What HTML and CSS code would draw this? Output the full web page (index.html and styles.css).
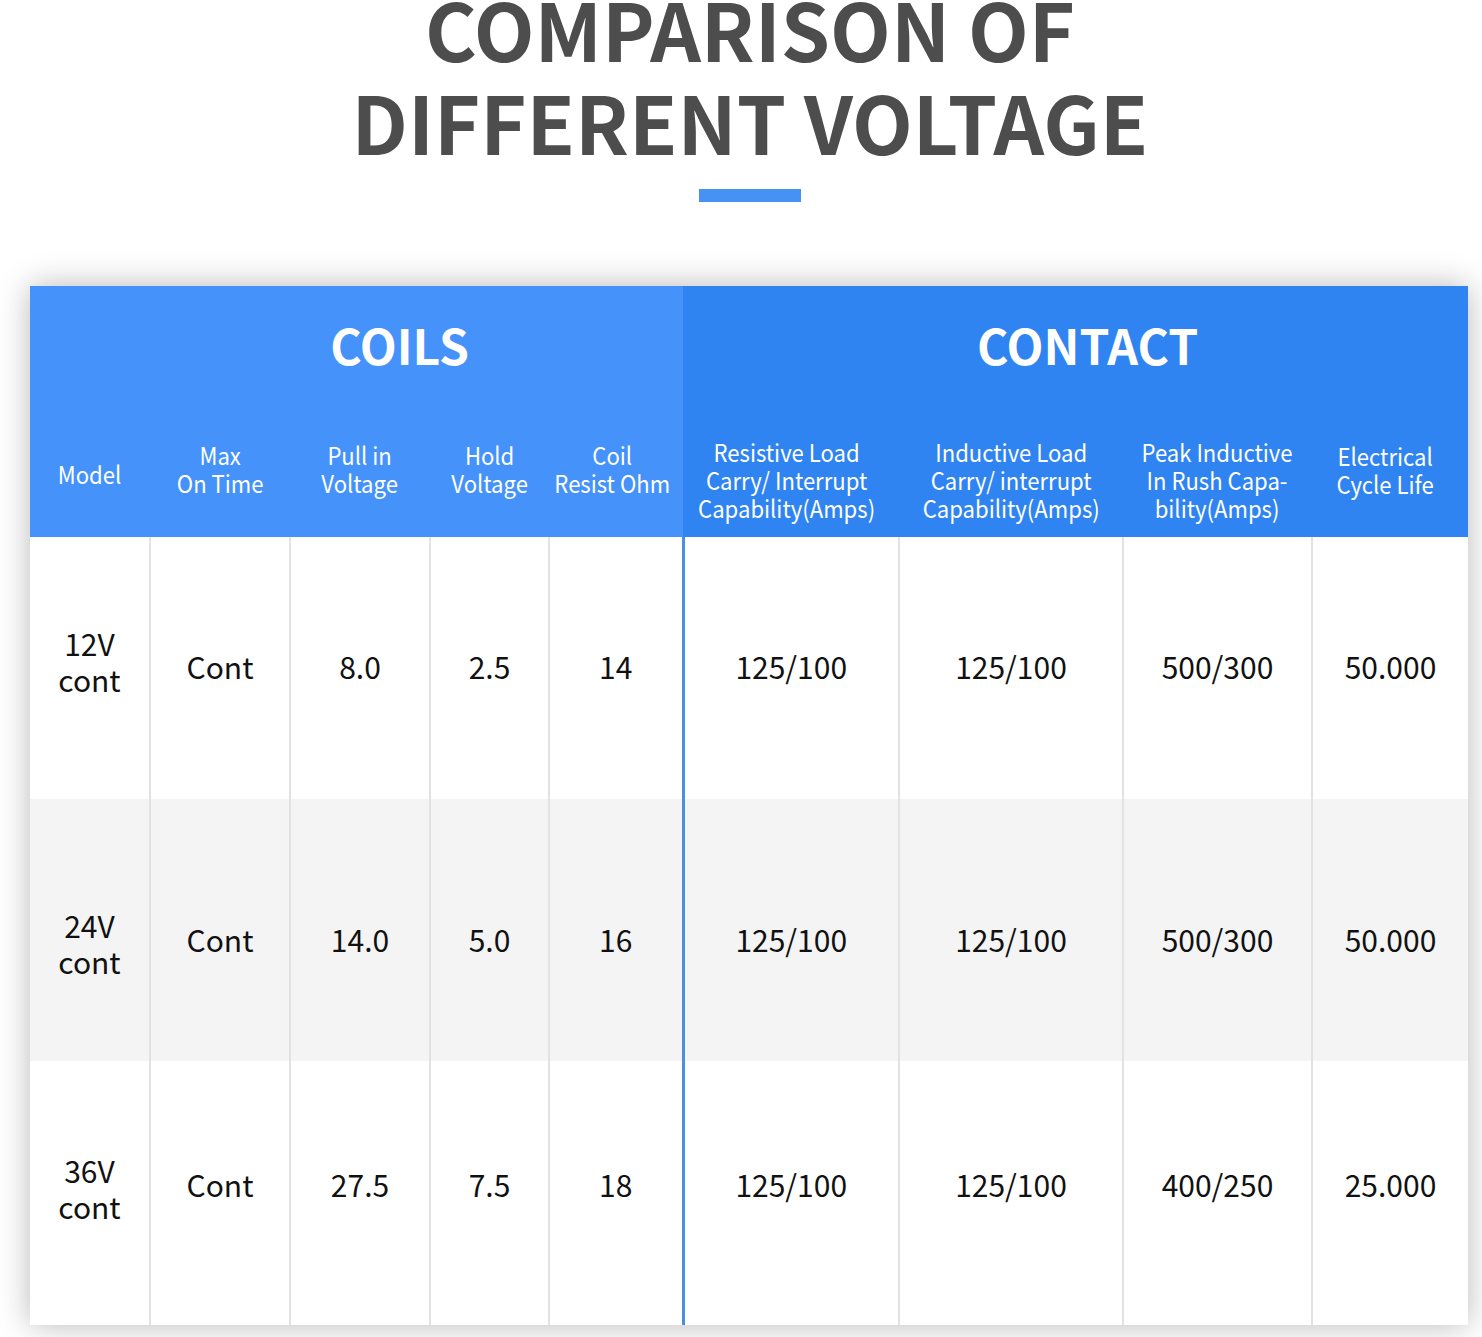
FILE: index.html
```html
<!DOCTYPE html>
<html lang="en">
<head>
<meta charset="utf-8">
<title>Comparison of Different Voltage</title>
<link rel="stylesheet" href="styles.css">
</head>
<body>
<div class="page">
  <div class="heading">
    <h1 class="title">COMPARISON OF<br>DIFFERENT VOLTAGE</h1>
    <div class="title-bar"></div>
  </div>
  <table class="spec">
    <colgroup>
      <col class="c1"><col class="c2"><col class="c3"><col class="c4"><col class="c5">
      <col class="c6"><col class="c7"><col class="c8"><col class="c9">
    </colgroup>
    <thead>
      <tr class="group-row">
        <th colspan="5" class="coils"><span class="group group-coils">COILS</span></th>
        <th colspan="4" class="contact"><span class="group group-contact">CONTACT</span></th>
      </tr>
      <tr class="sub-row">
        <th class="coils"><span class="sub">Model</span></th>
        <th class="coils"><span class="sub two">Max<br>On Time</span></th>
        <th class="coils"><span class="sub two">Pull in<br>Voltage</span></th>
        <th class="coils"><span class="sub two">Hold<br>Voltage</span></th>
        <th class="coils"><span class="sub two left4">Coil<br>Resist Ohm</span></th>
        <th class="contact"><span class="sub three left5">Resistive Load<br>Carry/ Interrupt<br>Capability(Amps)</span></th>
        <th class="contact"><span class="sub three">Inductive Load<br>Carry/ interrupt<br>Capability(Amps)</span></th>
        <th class="contact"><span class="sub three">Peak Inductive<br>In Rush Capa-<br>bility(Amps)</span></th>
        <th class="contact"><span class="sub life left5">Electrical<br>Cycle Life</span></th>
      </tr>
    </thead>
    <tbody>
      <tr class="row r1">
        <td class="model">12V<br>cont</td><td>Cont</td><td>8.0</td><td>2.5</td><td>14</td>
        <td class="split">125/100</td><td>125/100</td><td>500/300</td><td>50.000</td>
      </tr>
      <tr class="row r2">
        <td class="model">24V<br>cont</td><td>Cont</td><td>14.0</td><td>5.0</td><td>16</td>
        <td class="split">125/100</td><td>125/100</td><td>500/300</td><td>50.000</td>
      </tr>
      <tr class="row r3">
        <td class="model">36V<br>cont</td><td>Cont</td><td>27.5</td><td>7.5</td><td>18</td>
        <td class="split">125/100</td><td>125/100</td><td>400/250</td><td>25.000</td>
      </tr>
    </tbody>
  </table>
</div>
</body>
</html>
```
FILE: styles.css
```css
html, body {
  margin: 0;
  padding: 0;
  background: #ffffff;
}
body {
  font-family: "Noto Sans CJK SC", "Noto Sans", sans-serif;
  color: #111111;
}
.page {
  width: 1482px;
  height: 1337px;
  overflow: hidden;
  display: flex;
  flex-direction: column;
}
.heading {
  display: flex;
  flex-direction: column;
  align-items: center;
  padding-left: 18px;
}
.title {
  margin: -19px 0 0 0;
  font-size: 79px;
  line-height: 93px;
  font-weight: 700;
  color: #4d4d4d;
  text-align: center;
}
.title-bar {
  width: 102px;
  height: 13px;
  background: #4691f4;
  margin-top: 22px;
}
.spec {
  margin-top: 84px;
  margin-left: 30px;
  width: 1438px;
  table-layout: fixed;
  border-collapse: collapse;
  background: #ffffff;
  box-shadow: 0 0 30px rgba(0, 0, 0, 0.28);
}
.c1 { width: 120px; }
.c2 { width: 140px; }
.c3 { width: 140px; }
.c4 { width: 119px; }
.c5 { width: 134px; }
.c6 { width: 216px; }
.c7 { width: 224px; }
.c8 { width: 189px; }
.c9 { width: 156px; }

th {
  padding: 0;
  color: #ffffff;
  font-weight: 400;
  text-align: center;
  vertical-align: middle;
}
th.coils { background: #4592fb; }
th.contact { background: #2f84f1; }
.group-row { height: 125px; }
.sub-row { height: 126px; }
.group {
  display: inline-block;
  font-size: 48px;
  font-weight: 700;
  line-height: 58px;
  padding-bottom: 10px;
}
.group-coils { padding-left: 86px; }
.group-contact { padding-left: 24px; }
.sub {
  display: inline-block;
  font-size: 24px;
  line-height: 28px;
  white-space: nowrap;
  transform: scaleX(0.92);
}
.sub.two { padding-bottom: 10px; }
.sub.three { padding-top: 12px; }
.sub.life { padding-bottom: 8px; }
.sub.left4 { padding-right: 8px; }
.sub.left5 { padding-right: 10px; }

td {
  padding: 0;
  text-align: center;
  vertical-align: middle;
  font-size: 30px;
  line-height: 36px;
  color: #111111;
  border-left: 2px solid #e2e2e2;
}
td:first-child { border-left: none; }
td.split { border-left: 3px solid #4a8fe0; }
.r1 { height: 262px; }
.r2 { height: 262px; background: #f4f4f4; }
.r3 { height: 264px; }
.r1 td { padding-bottom: 4px; }
.r1 td.model { padding-bottom: 15px; }
.r2 td { padding-top: 18px; }
.r2 td.model { padding-top: 26px; }
.r3 td { padding-bottom: 18px; }
.r3 td.model { padding-bottom: 10px; }
```
